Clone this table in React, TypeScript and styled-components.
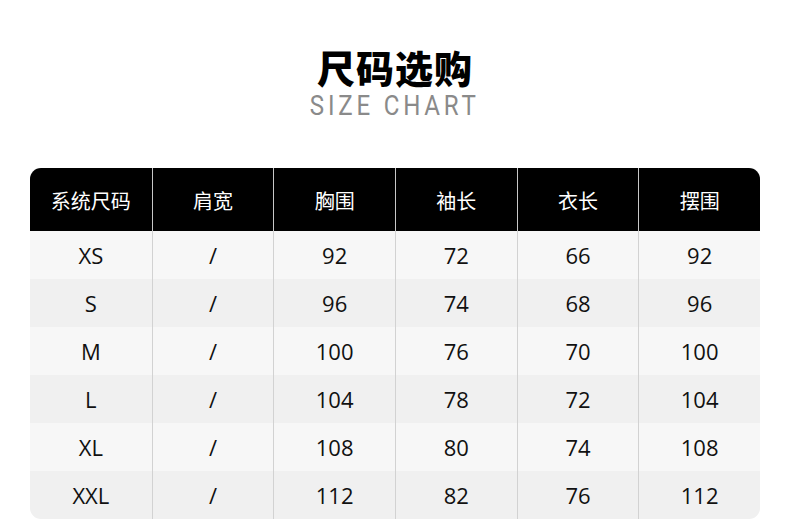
import React from "react";
import styled, { createGlobalStyle } from "styled-components";

const GlobalStyle = createGlobalStyle`
  body {
    margin: 0;
    background: #ffffff;
  }
`;

const Page = styled.div`
  width: 790px;
  height: 519px;
  overflow: hidden;
  display: flex;
  flex-direction: column;
  align-items: center;
  background: #ffffff;
`;

const Heading = styled.div`
  display: flex;
  flex-direction: column;
  align-items: center;
  padding-top: 47px;
  height: 123px;
  box-sizing: border-box;
`;

const Title = styled.h1`
  margin: 0;
  font-family: "Noto Sans CJK SC", sans-serif;
  font-weight: 900;
  font-size: 38px;
  line-height: 40px;
  color: #000000;
  letter-spacing: 1px;
`;

const Subtitle = styled.div`
  margin-top: 3px;
  font-family: Roboto, "Liberation Sans", sans-serif;
  font-size: 28px;
  line-height: 32px;
  letter-spacing: 4.4px;
  color: #8a8a8a;
  transform: scaleX(0.86);
`;

const Table = styled.div`
  width: 730px;
  margin-top: 45px;
  border-radius: 11px;
  overflow: hidden;
  display: flex;
  flex-direction: column;
`;

const Row = styled.div<{ $shade?: string }>`
  display: grid;
  grid-template-columns: repeat(6, 1fr);
  background: ${(p) => p.$shade || "#f7f7f7"};
`;

const HeadRow = styled(Row)`
  background: #000000;
  height: 63px;
`;

const Cell = styled.div`
  display: flex;
  align-items: center;
  justify-content: center;
  height: 48px;
  font-family: "Open Sans", "Noto Sans", sans-serif;
  font-size: 22px;
  color: #111111;
  border-left: 1px solid #d2d2d2;
  &:first-child {
    border-left: none;
  }
`;

const HeadCell = styled(Cell)`
  height: 63px;
  font-family: "Noto Sans CJK SC", sans-serif;
  font-size: 20px;
  color: #ffffff;
  border-left-color: #c8c8c8;
  padding-top: 2px;
  box-sizing: border-box;
`;

const headers = ["系统尺码", "肩宽", "胸围", "袖长", "衣长", "摆围"];

const rows = [
  ["XS", "/", "92", "72", "66", "92"],
  ["S", "/", "96", "74", "68", "96"],
  ["M", "/", "100", "76", "70", "100"],
  ["L", "/", "104", "78", "72", "104"],
  ["XL", "/", "108", "80", "74", "108"],
  ["XXL", "/", "112", "82", "76", "112"],
];

export default function App() {
  return (
    <Page>
      <GlobalStyle />
      <Heading>
        <Title>尺码选购</Title>
        <Subtitle>SIZE CHART</Subtitle>
      </Heading>
      <Table>
        <HeadRow>
          {headers.map((h) => (
            <HeadCell key={h}>{h}</HeadCell>
          ))}
        </HeadRow>
        {rows.map((r, i) => (
          <Row key={r[0]} $shade={i % 2 === 0 ? "#f7f7f7" : "#f0f0f0"}>
            {r.map((v, j) => (
              <Cell key={j}>{v}</Cell>
            ))}
          </Row>
        ))}
      </Table>
    </Page>
  );
}
